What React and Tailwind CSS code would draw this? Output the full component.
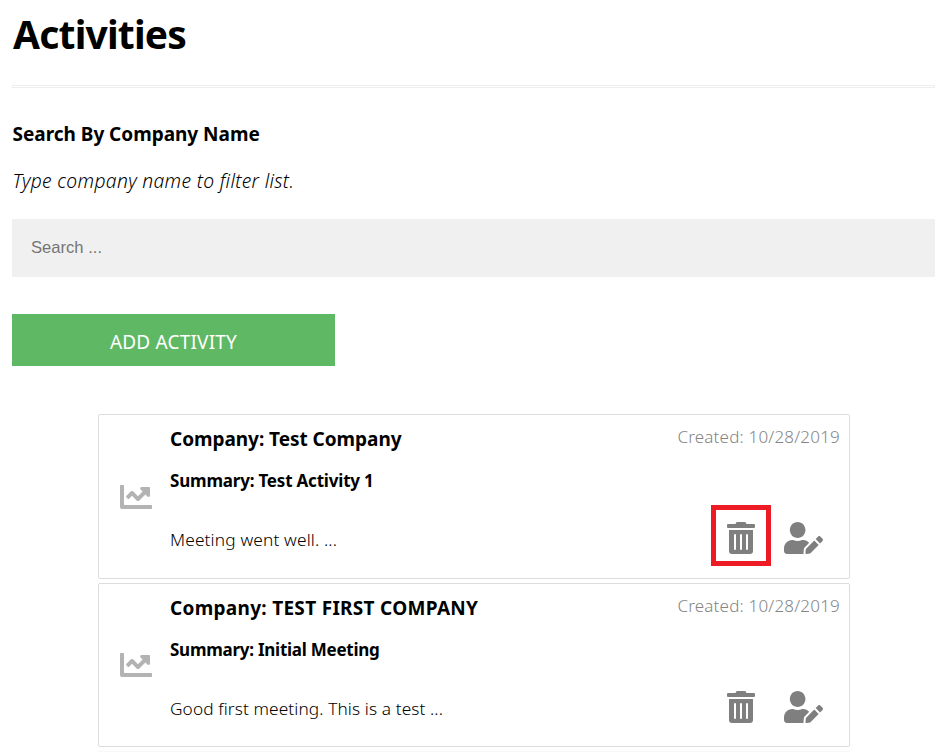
import { FaChartLine, FaTrashAlt, FaUserEdit } from "react-icons/fa";

const activities = [
  {
    company: "Test Company",
    companyClass: "tracking-[-0.04px]",
    summary: "Test Activity 1",
    summaryClass: "tracking-[-0.2px]",
    note: "Meeting went well. ...",
    noteClass: "tracking-[0.15px]",
    cardClass: "h-[165px]",
    chartClass: "mt-[66px]",
    actionsClass: "mt-[73px]",
    highlighted: true,
  },
  {
    company: "TEST FIRST COMPANY",
    companyClass: "tracking-[0.3px]",
    summary: "Initial Meeting",
    summaryClass: "tracking-[-0.26px]",
    note: "Good first meeting. This is a test ...",
    noteClass: "tracking-[0.1px]",
    cardClass: "h-[164px]",
    chartClass: "mt-[65px]",
    actionsClass: "mt-[73px]",
    highlighted: false,
  },
];

function ActivityCard({ activity }) {
  return (
    <article
      className={`flex w-[752px] rounded-[2px] border border-[#dcdcdc] bg-white pl-[21px] pr-[9px] ${activity.cardClass}`}
    >
      <FaChartLine className={`size-8 shrink-0 text-[#b3b3b3] ${activity.chartClass}`} />
      <div className="ml-[18px] grow whitespace-nowrap">
        <h3 className={`mt-[11px] text-[19px] leading-[26px] font-bold ${activity.companyClass}`}>
          Company: {activity.company}
        </h3>
        <h4 className={`mt-[17px] text-[17px] leading-[24px] font-bold ${activity.summaryClass}`}>
          Summary: {activity.summary}
        </h4>
        <p className={`mt-[35px] text-[17.3px] leading-[24px] font-light ${activity.noteClass}`}>
          {activity.note}
        </p>
      </div>
      <div className="flex flex-col items-end">
        <p className="mt-[10px] h-[24px] text-[17px] leading-[24px] font-light tracking-[0.2px] whitespace-nowrap text-[#858585]">
          Created: 10/28/2019
        </p>
        <div className={`mr-[17px] flex gap-[29px] text-[#7f7f7f] ${activity.actionsClass}`}>
          <button className="relative h-8 w-7" aria-label="Delete">
            <FaTrashAlt className="h-8 w-7" />
            {activity.highlighted && (
              <span className="absolute top-[-17px] left-[-16px] h-[61px] w-[60px] border-5 border-[#ed1c24]" />
            )}
          </button>
          <button className="h-8 w-[39px]" aria-label="Edit">
            <FaUserEdit className="h-8 w-[39px]" preserveAspectRatio="none" />
          </button>
        </div>
      </div>
    </article>
  );
}

export default function App() {
  return (
    <main className="h-[752px] overflow-hidden bg-white px-3 pt-3 font-['Noto_Sans',sans-serif] text-black">
      <h1 className="pl-px text-[39px] leading-[44px] font-bold tracking-[-0.8px]">Activities</h1>
      <div className="mt-[29px] h-[3px] border border-[#eeeeee]" />
      <h2 className="mt-[33px] pl-[0.5px] text-[19px] leading-[26px] font-bold tracking-[-0.02px]">
        Search By Company Name
      </h2>
      <p className="mt-[21px] pl-[0.5px] text-[19.3px] leading-[26px] font-light tracking-[0.32px] italic">
        Type company name to filter list.
      </p>
      <input
        type="text"
        placeholder="Search ..."
        className="mt-[25px] block h-[58px] w-full bg-[#f0f0f0] pr-5 pl-[19px] font-['Liberation_Sans',sans-serif] text-[16.6px] outline-none placeholder:text-[#757575]"
      />
      <button className="mt-[37px] block h-[52px] w-[323px] bg-[#5fb864] pt-[4px] text-[19px] leading-[26px] tracking-[0.2px] text-white">
        ADD ACTIVITY
      </button>
      <section className="mt-12 ml-[86px] flex flex-col gap-1">
        {activities.map((activity) => (
          <ActivityCard key={activity.company} activity={activity} />
        ))}
        <div className="h-px w-[752px] bg-[#f8f8f8]" />
      </section>
    </main>
  );
}
